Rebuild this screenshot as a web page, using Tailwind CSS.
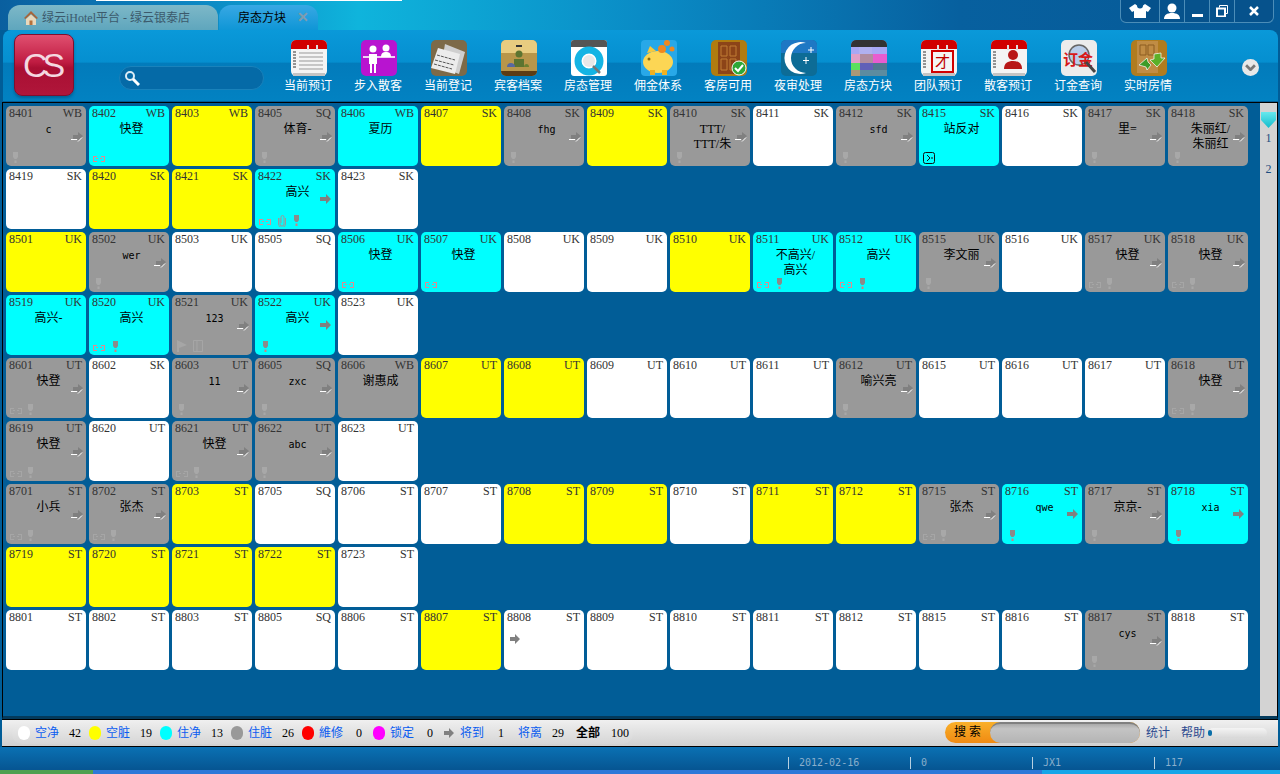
<!DOCTYPE html>
<html lang="zh">
  <head>
    <meta charset="UTF-8" />
    <script src="https://cdn.jsdelivr.net/npm/@tailwindcss/browser@4"></script>
    <title>房态方块</title>
  </head>
  <body class="w-[1280px] h-[774px] overflow-hidden flex flex-col bg-[#015d97] font-['Liberation_Serif','Noto_Sans_CJK_SC',serif] text-xs">
    <!-- title bar -->
    <header class="h-[30px] flex shrink-0 relative bg-[linear-gradient(90deg,#0a5f9f_0%,#0c86c2_15%,#0fb4dc_28%,#0a8cc6_50%,#07609f_75%,#065a97_100%)]">
      <div class="absolute left-[96px] top-0 w-[306px] h-px bg-white"></div>
      <div class="ml-[8px] mt-[5px] w-[210px] h-[25px] rounded-t-xl bg-[linear-gradient(#7db8c8,#5fa6bd)] flex items-center pl-[15px] text-[#3c5a6c]">
        <svg viewBox="0 0 16 16" class="w-[16px] h-[16px] mr-[3px]">
          <path d="M1 8 8 1l7 7-1.500 1L8 4 2.500 9z" fill="#a5653c" />
          <path d="M3 9l5-4.500L13 9v6H3z" fill="#e8d8bc" />
          <path d="M6.500 10.500h3V15h-3z" fill="#b5713c" />
        </svg>
        <span>绿云iHotel平台 - 绿云银泰店</span>
      </div>
      <div class="ml-px w-[99px] mt-[5px] h-[25px] rounded-t-xl bg-[linear-gradient(#38a8e4,#0f96d6)] flex items-center pl-[19px] text-black">
        <span>房态方块</span>
        <span class="ml-[11px] text-[#7f9cae] font-bold text-sm leading-none">✕</span>
      </div>
      <div class="absolute left-[1120px] top-0 w-[154px] h-[23px] flex border border-t-0 border-[#4b8db8] rounded-b-md bg-[#06528c] text-white divide-x divide-[#4b8db8]">
        <div class="w-[39px] flex items-center justify-center">
          <svg viewBox="0 0 22 14" class="w-[22px] h-[14px]"><path d="M6 0 0 4l3 4 2-1v7h12V7l2 1 3-4-6-4-2 1.500a3 3 0 0 1-6 0z" fill="#fff" /></svg>
        </div>
        <div class="w-[25px] flex items-center justify-center">
          <svg viewBox="0 0 18 16" class="w-[18px] h-[16px]"><circle cx="9" cy="5" r="4.500" fill="#fff" /><path d="M1 16c0-4 3-6 8-6s8 2 8 6z" fill="#fff" /></svg>
        </div>
        <div class="w-[25px] flex items-end justify-center pb-[5px]"><div class="w-[11px] h-[3px] bg-white"></div></div>
        <div class="w-[25px] flex items-center justify-center">
          <svg viewBox="0 0 12 12" class="w-[12px] h-[12px]" fill="none" stroke="#fff"><path d="M3.500 2.500v-2h8v8h-2" /><path d="M1 3.500h8v8H1z" stroke-width="2" /></svg>
        </div>
        <div class="flex-1 flex items-center justify-center">
          <svg viewBox="0 0 10 10" class="w-[10px] h-[10px]" stroke="#fff" stroke-width="2.500"><path d="M1 1l8 8M9 1 1 9" /></svg>
        </div>
      </div>
    </header>

    <!-- toolbar -->
    <nav class="h-[71px] shrink-0 ml-[3px] mr-[2px] rounded-t-lg relative flex bg-[linear-gradient(#0a99d9_0%,#058fd0_45%,#027bbb_47%,#0282c2_100%)]">
      <div class="absolute left-[11px] top-[4px] w-[60px] h-[62px] rounded-lg border border-[#7d1030] bg-[linear-gradient(#e05070,#c01c42_45%,#a90f33_55%,#b0163a)] shadow-[0_2px_3px_#0356] flex items-center justify-center">
        <span class="text-[#f4d8e0] text-[34px] leading-none tracking-[-5px] pr-[5px] font-['Liberation_Sans',sans-serif]">CS</span>
      </div>
      <div class="absolute left-[116px] top-[36px] w-[145px] h-[24px] rounded-full bg-[#056aa7] border border-[#1a82bb] flex items-center pl-[4px]">
        <svg viewBox="0 0 16 16" class="w-[16px] h-[16px]" fill="none" stroke="#fff"><circle cx="6" cy="6" r="4" stroke-width="2" stroke="#dcecf6" /><path d="M9 9l6 6" stroke-width="3" /></svg>
      </div>
      <div class="ml-[270px] flex text-white" id="tools"></div>
      <div class="absolute left-[1239px] top-[29px] w-[17px] h-[17px] rounded-full bg-[#e8e8e8] flex items-center justify-center">
        <svg viewBox="0 0 10 6" class="w-[11px] h-[7px]" fill="none" stroke="#777" stroke-width="2.500"><path d="M1 1l4 4 4-4" /></svg>
      </div>
    </nav>

    <!-- room grid -->
    <main class="h-[617px] shrink-0 mx-[2px] mt-px border-t border-x border-b-[3px] border-x-black border-t-black border-b-[#033a5c] bg-[#015d97] flex relative">
      <div id="rooms" class="w-[1256px] pl-[3px] pt-[3px] grid grid-cols-[repeat(15,80px)] auto-rows-[60px] gap-[3px]"></div>
      <div class="absolute right-0 top-0 w-[17px] bottom-0 bg-[#d3d3d3] flex flex-col items-center text-[#1c4c80]">
        <div class="w-[15px] h-[16px] mt-[9px] bg-[linear-gradient(#66e8ee,#14bccc)] [clip-path:polygon(0_0,100%_0,100%_50%,50%_100%,0_50%)]"></div>
        <span class="mt-[3px] leading-[14px]">1</span>
        <span class="mt-[17px] leading-[14px]">2</span>
      </div>
    </main>

    <!-- legend bar -->
    <section class="h-[28px] shrink-0 mx-[2px] border-y border-black bg-[linear-gradient(#f0f0f0,#d0d0d0)] relative flex items-center">
      <div class="ml-[10px] w-[621px] h-[21px] rounded-full bg-[linear-gradient(#ececec,#d6d6d6)] flex items-center pl-[6px] text-black whitespace-nowrap">
        <div class="w-[71px] flex items-center"><i class="w-[12px] h-[14px] rounded-full bg-white"></i><span class="ml-[5px] text-[#0a5cf0]">空净</span><span class="ml-[10px]">42</span></div>
        <div class="w-[71px] flex items-center"><i class="w-[12px] h-[14px] rounded-full bg-[#ffff00]"></i><span class="ml-[5px] text-[#0a5cf0]">空脏</span><span class="ml-[10px]">19</span></div>
        <div class="w-[71px] flex items-center"><i class="w-[12px] h-[14px] rounded-full bg-[#00ffff]"></i><span class="ml-[5px] text-[#0a5cf0]">住净</span><span class="ml-[10px]">13</span></div>
        <div class="w-[71px] flex items-center"><i class="w-[12px] h-[14px] rounded-full bg-[#999]"></i><span class="ml-[5px] text-[#0a5cf0]">住脏</span><span class="ml-[10px]">26</span></div>
        <div class="w-[71px] flex items-center"><i class="w-[12px] h-[14px] rounded-full bg-[#ff0000]"></i><span class="ml-[5px] text-[#0a5cf0]">維修</span><span class="ml-[13px]">0</span></div>
        <div class="w-[71px] flex items-center"><i class="w-[12px] h-[14px] rounded-full bg-[#ff00ff]"></i><span class="ml-[5px] text-[#0a5cf0]">锁定</span><span class="ml-[13px]">0</span></div>
        <svg viewBox="0 0 10 10" class="w-[10px] h-[10px]"><path d="M0 3h5V0l5 5-5 5V7H0z" fill="#808080" /></svg>
        <span class="ml-[6px] text-[#0a5cf0]">将到</span><span class="ml-[14px]">1</span>
        <span class="ml-[14px] text-[#0a5cf0]">将离</span><span class="ml-[10px]">29</span>
        <span class="ml-[12px] font-bold">全部</span><span class="ml-[11px]">100</span>
      </div>
      <div class="absolute left-[943px] top-[2px] w-[195px] h-[21px] rounded-full bg-[linear-gradient(#f9b02a,#f08a12)] flex">
        <span class="w-[45px] pl-[3px] text-center leading-[20px] tracking-[3px] text-black">搜索</span>
        <div class="flex-1 rounded-full bg-[linear-gradient(#aaa,#c4c4c4_25%,#b4b4b4)] border-t-2 border-[#808080]"></div>
      </div>
      <span class="absolute left-[1144px] top-[5px] text-[#2d4b90]">统计</span>
      <span class="absolute left-[1179px] top-[5px] text-[#2d4b90]">帮助</span>
      <div class="absolute left-[1206px] top-[8px] w-[59px] h-[10px] rounded-full bg-[linear-gradient(#f4f4f4,#d8d8d8)] flex items-center">
        <i class="w-[4px] h-[6px] rounded-full bg-[#0b6fa8]"></i>
      </div>
    </section>

    <!-- status bar -->
    <footer class="flex-1 bg-[linear-gradient(#0a71b3,#05508c)] relative">
      <div class="absolute left-[788px] top-[10px] flex text-[#8aafcc] font-['DejaVu_Sans_Mono',monospace] text-[10px] leading-[12px]">
        <div class="w-[122px] border-l border-[#b8d0e0] pl-[10px]">2012-02-16</div>
        <div class="w-[122px] border-l border-[#b8d0e0] pl-[10px]">0</div>
        <div class="w-[122px] border-l border-[#b8d0e0] pl-[10px]">JX1</div>
        <div class="w-[100px] border-l border-[#b8d0e0] pl-[10px]">117</div>
      </div>
      <div class="absolute left-0 right-0 bottom-0 h-[4px] flex">
        <div class="w-[93px] bg-[#4ea050]"></div>
        <div class="w-[949px] bg-[#2d78d8]"></div>
        <div class="flex-1 bg-[#16a6e8]"></div>
      </div>
    </footer>

    <script>
      // calendar base shared by the booking icons
      const cal = (inner) => `<rect width="36" height="36" rx="5" fill="#f4f4f4"/><path d="M0 9V5a5 5 0 0 1 5-5h26a5 5 0 0 1 5 5v4z" fill="#d10000"/><path d="M2 33h32v3H2z" fill="#c4c4c4"/><path d="M2 12h3M2 15h3M2 18h3M2 21h3M2 24h3M2 27h3" stroke="#333"/><path d="M17 5v5M26 5v5" stroke="#ddd" stroke-width="2"/>${inner}`
      const lines = '<path d="M8 13h24M8 17h24M8 21h24M8 25h24M8 29h24" stroke="#999"/>'

      const tools = [
        ["当前预订", cal(lines)],
        ["步入散客", `<rect width="36" height="36" rx="5" fill="#b814d0"/><circle cx="12" cy="9" r="3.500" fill="#fff"/><path d="M8 14h8v10h-1v9h-2v-9h-2v9H9v-9H8z" fill="#fff"/><path d="M2 17h6M16 17h18" stroke="#f0d0f4" stroke-width="2"/><circle cx="25" cy="8" r="3.500" fill="#fff"/><path d="M20 17c0-4 2-5 5-5s5 1 5 5z" fill="#fff"/>`],
        ["当前登记", `<rect width="36" height="36" rx="5" fill="#7d6a48"/><path d="M14 4 34 12l-6 22L10 27z" fill="#cfcfcf"/><path d="M7 8 29 14l-5 20L0 28z" fill="#ececec"/><path d="M3 24l18 5M4 20l19 5M6 15l18 5" stroke="#555" stroke-dasharray="3 1"/>`],
        ["宾客档案", `<rect width="36" height="36" rx="5" fill="#b8964a"/><path d="M0 5a5 5 0 0 1 5-5h26a5 5 0 0 1 5 5v8H0z" fill="#e8cc80"/><path d="M0 31h36a5 5 0 0 1-5 5H5a5 5 0 0 1-5-5z" fill="#5c3c14"/><rect x="15" y="5" width="6" height="2" fill="#333"/><circle cx="18" cy="14" r="3.500" fill="#5c7430"/><path d="M13 27v-8h10v8z" fill="#5c7430"/><path d="M6 27c0-3 2-4 4-4s4 1 4 4z" fill="#5868a0"/><path d="M23 27c0-2 1-3 2.500-3s2.500 1 2.500 3z" fill="#6c8030"/>`],
        ["房态管理", `<rect width="36" height="36" rx="3" fill="#fff"/><path d="M0 3a3 3 0 0 1 3-3h30a3 3 0 0 1 3 3v4H0z" fill="#555"/><circle cx="18" cy="21" r="11" fill="none" stroke="#14b4e4" stroke-width="7"/><circle cx="18" cy="21" r="6" fill="#e8e8e8"/><path d="M22 26l7 7" stroke="#777" stroke-width="2.500"/>`],
        ["佣金体系", `<rect width="36" height="36" rx="4" fill="#28a8e8"/><ellipse cx="17" cy="22" rx="15" ry="11" fill="#fcd654"/><path d="M9 30h5v5H9zM21 30h5v5h-5z" fill="#f0b020"/><path d="M6 13l3-7 6 5z" fill="#f8c83c"/><circle cx="8" cy="19" r="1.500" fill="#8a6a10"/><circle cx="21" cy="9" r="4" fill="#f08820"/><circle cx="26" cy="3" r="3" fill="#f08820"/><circle cx="31" cy="9" r="2.500" fill="#f08820"/>`],
        ["客房可用", `<rect width="36" height="36" rx="5" fill="#b07c10"/><rect x="7" y="2" width="22" height="32" fill="#8c4418"/><path d="M10 6h6v10h-6zM19 6h6v10h-6zM10 19h6v11h-6zM19 19h6v11h-6z" fill="none" stroke="#c07c34"/><circle cx="28" cy="28" r="7" fill="#2ea838" stroke="#fff"/><path d="M24 28l3 3 5-6" fill="none" stroke="#fff" stroke-width="2"/>`],
        ["夜审处理", `<rect width="36" height="36" rx="5" fill="#0d6c96"/><path d="M0 5a5 5 0 0 1 5-5h26a5 5 0 0 1 5 5v8H0z" fill="#1e78c4"/><path d="M25 3a16 16 0 1 0 0 30 13 13 0 0 1 0-30z" fill="#fff"/><path d="M20 7a12 12 0 0 0 0 22 12 12 0 0 1 0-22z" fill="#2a8cb8"/><path d="M30 7v6M27 10h6M25 17v7M22 20.500h6" stroke="#fff"/>`],
        ["房态方块", `<rect width="36" height="36" rx="5" fill="#a8a8f4"/><path d="M0 5a5 5 0 0 1 5-5h26a5 5 0 0 1 5 5v2H0z" fill="#333"/><path d="M8 7h13v9H8z" fill="#b0b0f0"/><path d="M0 14h9v10H0z" fill="#e0a0c8"/><path d="M9 14h13v9H9z" fill="#b08ca0"/><path d="M22 14h14v9H22z" fill="#e85cd0"/><path d="M0 23h9v7H0z" fill="#5ce05c"/><path d="M9 23h13v7H9z" fill="#6060b8"/><path d="M22 23h14v7H22z" fill="#507890"/><path d="M0 30h9v6H0z" fill="#a89878"/><path d="M9 30h27v6H9z" fill="#5c8ca0"/>`],
        ["团队预订", cal('<rect x="11" y="11" width="21" height="21" fill="none" stroke="#d10000" stroke-width="2"/><text x="21.500" y="27" font-size="15" text-anchor="middle" fill="#c00000">才</text>')],
        ["散客预订", cal('<circle cx="22" cy="15" r="5" fill="#b81818"/><path d="M13 29c0-6 4-8 9-8s9 2 9 8z" fill="#b81818"/>')],
        ["订金查询", `<rect width="36" height="36" rx="5" fill="#ececec"/><circle cx="18" cy="15" r="10" fill="#b8cce8" stroke="#666" stroke-width="1.500"/><text x="2" y="25" font-size="15" font-weight="700" fill="#d81818">订金</text><path d="M25 22l9 10" stroke="#444" stroke-width="3"/>`],
        ["实时房情", `<rect width="36" height="36" rx="5" fill="#b07c20"/><rect x="6" y="1" width="21" height="32" fill="#c08c44"/><path d="M9 5h6v10H9zM17 5h6v10h-6z" fill="none" stroke="#8c5c20"/><path d="M8 25l8-7 1 4 3 3-4 5-1-3z" fill="#3c9c28" stroke="#fff" stroke-width=".7"/><path d="M34 18l-8 9-7-7 4-1 0-5 7-1v5z" fill="#5cb028" stroke="#fff" stroke-width=".7"/>`],
      ]
      document.getElementById("tools").innerHTML = tools
        .map(
          ([label, svg]) => `<div class="w-[70px] flex flex-col items-center pt-[10px]">
            <svg viewBox="0 0 36 36" class="w-[36px] h-[36px] block ml-[2px] font-['Noto_Sans_CJK_SC',sans-serif]">${svg}</svg>
            <span class="mt-[2px] leading-[16px] text-xs">${label}</span>
          </div>`
        )
        .join("")

      const colors = {
        w: "bg-white",
        y: "bg-[#ffff00]",
        c: "bg-[#00ffff]",
        g: "bg-[#999999]",
      }
      // flags: a arrow, l link, p pin, k clip, b box, f faint flag/box, h arrow on the left
      const rows = [
        "8401 WB g c ap|8402 WB c 快登 l|8403 WB y|8405 SQ g 体育- ap|8406 WB c 夏历|8407 SK y|8408 SK g fhg ap|8409 SK y|8410 SK g TTT/<br>TTT/朱 ap|8411 SK w|8412 SK g sfd ap|8415 SK c 站反对 b|8416 SK w|8417 SK g 里= ap|8418 SK g 朱丽红/<br>朱丽红 ap",
        "8419 SK w|8420 SK y|8421 SK y|8422 SK c 高兴 alkp|8423 SK w",
        "8501 UK y|8502 UK g wer ap|8503 UK w|8505 SQ w|8506 UK c 快登 l|8507 UK c 快登 l|8508 UK w|8509 UK w|8510 UK y|8511 UK c 不高兴/<br>高兴 lp|8512 UK c 高兴 lp|8515 UK g 李文丽 ap|8516 UK w|8517 UK g 快登 alp|8518 UK g 快登 alp",
        "8519 UK c 高兴-|8520 UK c 高兴 lp|8521 UK g 123 af|8522 UK c 高兴 ap|8523 UK w",
        "8601 UT g 快登 alp|8602 SK w|8603 UT g 11 ap|8605 SQ g zxc ap|8606 WB g 谢惠成|8607 UT y|8608 UT y|8609 UT w|8610 UT w|8611 UT w|8612 UT g 喻兴亮 ap|8615 UT w|8616 UT w|8617 UT w|8618 UT g 快登 alp",
        "8619 UT g 快登 alp|8620 UT w|8621 UT g 快登 alp|8622 UT g abc ap|8623 UT w",
        "8701 ST g 小兵 alp|8702 ST g 张杰 alp|8703 ST y|8705 SQ w|8706 ST w|8707 ST w|8708 ST y|8709 ST y|8710 ST w|8711 ST y|8712 ST y|8715 ST g 张杰 alp|8716 ST c qwe ap|8717 ST g 京京- ap|8718 ST c xia ap",
        "8719 ST y|8720 ST y|8721 ST y|8722 ST y|8723 ST w",
        "8801 ST w|8802 ST w|8803 ST w|8805 SQ w|8806 ST w|8807 ST y|8808 ST w  h|8809 ST w|8810 ST w|8811 ST w|8812 ST w|8815 ST w|8816 ST w|8817 ST g cys ap|8818 ST w",
      ]

      const arrow = (gray) =>
        gray
          ? `<svg viewBox="0 0 12 10" class="absolute left-[65px] top-[26px] w-[12px] h-[10px]"><path d="M2 3h5V0l5 4-5 5V7H2z" fill="#808080"/><path d="M0 7.500h6M7 9.500l4-4" stroke="#fff"/></svg>`
          : `<svg viewBox="0 0 11 10" class="absolute left-[65px] top-[25px] w-[11px] h-[10px]"><path d="M0 3h6V0l5 5-5 5V7H0z" fill="#808080"/></svg>`
      const link = (gray) =>
        `<svg viewBox="0 0 12 6" shape-rendering="crispEdges" class="absolute left-[4px] top-[50px] w-[12px] h-[6px]" fill="none" stroke="${gray ? "#a6a6a6" : "#e08a90"}"><path d="M4 .5H.5v5H4M8 .5h3.500v5H8M3 2.500h2M7 2.500h2"/></svg>`
      const pin = (x, gray) =>
        `<svg viewBox="0 0 5 11" style="left:${x}px" class="absolute top-[46px] w-[5px] h-[11px]"><path d="M0 0h5v5L3.500 7h-2L0 5z" fill="${gray ? "#a8a8a8" : "#8a8a8a"}"/><path d="M1.500 8.500h2V11h-2z" fill="${gray ? "#a8a8a8" : "#d08080"}"/></svg>`
      const clip = `<svg viewBox="0 0 8 12" class="absolute left-[23px] top-[46px] w-[8px] h-[12px]" fill="none" stroke="#9a9a9a"><path d="M2 3v6a2 2 0 0 0 4 0V2a1.500 1.500 0 0 0-3 0v6"/><path d="M7.500 3v6a3.500 3.500 0 0 1-7 0V3"/></svg>`

      document.getElementById("rooms").innerHTML = rows
        .map((row) => {
          const cells = row.split("|").map((cell) => {
            const [num, type, color, name = "", flags = ""] = cell.split(" ")
            const gray = color === "g"
            let icons = ""
            if (flags.includes("a")) icons += arrow(gray)
            if (flags.includes("l")) icons += link(gray)
            if (flags.includes("k")) icons += clip
            if (flags.includes("p")) icons += pin(flags.includes("k") ? 39 : flags.includes("l") ? (gray ? 22 : 24) : gray ? 7 : 8, gray)
            if (flags.includes("b")) icons += `<svg viewBox="0 0 12 12" class="absolute left-[4px] top-[46px] w-[12px] h-[12px]" fill="none" stroke="#111"><rect x=".5" y=".5" width="11" height="11" rx="2"/><path d="M4 3l3 3-3 3M8 6h2"/></svg>`
            if (flags.includes("f")) icons += `<svg viewBox="0 0 26 12" class="absolute left-[5px] top-[45px] w-[26px] h-[12px]"><path d="M0 0l10 5-8 3v4H0z" fill="#a6a6a6"/><path d="M16.500.5h9v11h-9zM20 .5v11" fill="none" stroke="#a6a6a6"/></svg>`
            if (flags.includes("h")) icons += `<svg viewBox="0 0 10 10" class="absolute left-[6px] top-[24px] w-[10px] h-[10px]"><path d="M0 3h5V0l5 5-5 5V7H0z" fill="#808080"/></svg>`
            const ascii = /^[\x00-\x7f]+$/.test(name)
            return `<div class="relative rounded-[5px] ${colors[color]} text-black">
              <div class="flex justify-between pl-[3px] pr-[4px] leading-[14px] text-[#333]"><span>${num}</span><span>${type}</span></div>
              <div class="absolute left-[5px] right-0 top-[16px] text-center leading-[15px] ${ascii ? "font-['DejaVu_Sans_Mono',monospace] text-[10px]" : ""}">${name}</div>
              ${icons}
            </div>`
          })
          return cells.join("") + "<div></div>".repeat(15 - cells.length)
        })
        .join("")
    </script>
  </body>
</html>
